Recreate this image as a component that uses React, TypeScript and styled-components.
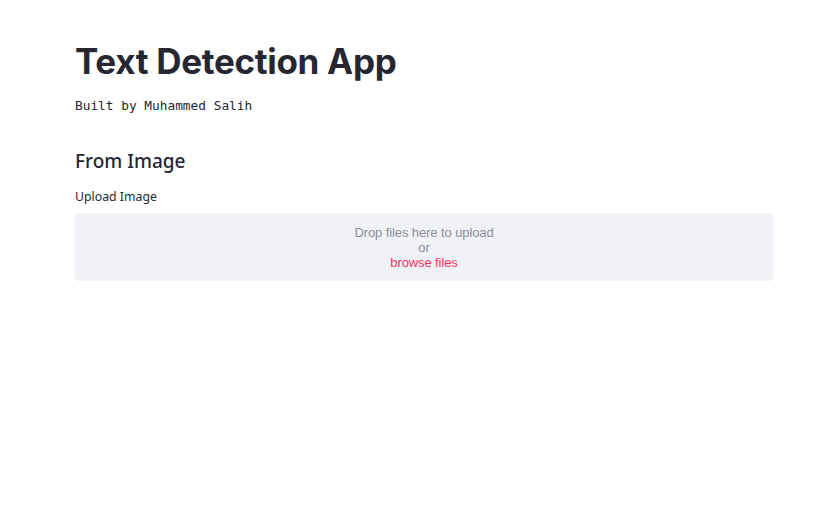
import React from "react";
import styled, { createGlobalStyle } from "styled-components";

const Global = createGlobalStyle`
  html, body { margin: 0; padding: 0; background: #ffffff; }
  body { font-family: "Noto Sans", "Open Sans", sans-serif; color: #262730; }
`;

const Main = styled.main`
  padding: 39px 65px 40px 75px;
  display: flex;
  flex-direction: column;
`;

const Title = styled.h1`
  margin: 0;
  font-family: "Inter", "Noto Sans", sans-serif;
  font-weight: 700;
  font-size: 35px;
  line-height: 44px;
  letter-spacing: -0.3px;
  color: #262730;
`;

const Byline = styled.code`
  display: block;
  margin-top: 14px;
  font-family: "DejaVu Sans Mono", "Liberation Mono", monospace;
  font-size: 12.8px;
  line-height: 18px;
  color: #262730;
`;

const Subheader = styled.h3`
  margin: 32px 0 0;
  font-family: "Noto Sans", sans-serif;
  font-weight: 500;
  font-size: 19px;
  line-height: 28px;
  color: #262730;
`;

const Label = styled.label`
  margin-top: 13px;
  font-size: 12.3px;
  line-height: 18px;
  color: #262730;
`;

const Dropzone = styled.section`
  margin-top: 7px;
  height: 68px;
  background: #f0f2f6;
  border-radius: 4px;
  display: flex;
  flex-direction: column;
  align-items: center;
  justify-content: center;
  font-family: "Liberation Sans", "Noto Sans", sans-serif;
  font-size: 13px;
  letter-spacing: -0.1px;
  line-height: 15px;
  color: #8c8f98;
`;

const Browse = styled.span`
  color: #f63366;
`;

export default function App() {
  return (
    <>
      <Global />
      <Main>
        <Title>Text Detection App</Title>
        <Byline>Built by Muhammed Salih</Byline>
        <Subheader>From Image</Subheader>
        <Label>Upload Image</Label>
        <Dropzone>
          <span>Drop files here to upload</span>
          <span>or</span>
          <Browse>browse files</Browse>
        </Dropzone>
      </Main>
    </>
  );
}
